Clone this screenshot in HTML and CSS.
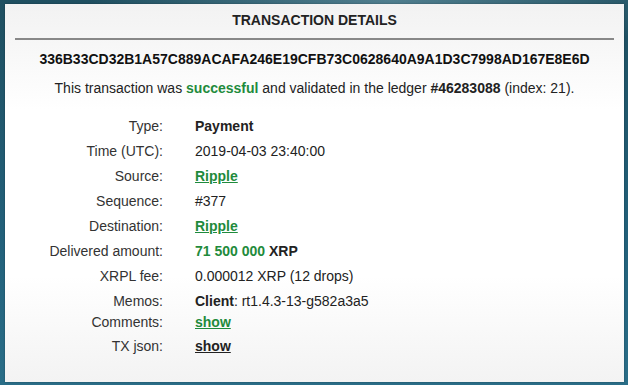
FILE: index.html
```html
<!DOCTYPE html>
<html lang="en">
<head>
    <meta charset="UTF-8">
    <meta name="viewport" content="width=device-width, initial-scale=1.0">
    <title>Transaction Details</title>
    <link rel="stylesheet" href="styles.css">
</head>
<body>
    <div class="card">
        <h1 class="card-title">TRANSACTION DETAILS</h1>
        <div class="tx-hash">336B33CD32B1A57C889ACAFA246E19CFB73C0628640A9A1D3C7998AD167E8E6D</div>
        <p class="tx-status">This transaction was <span class="green">successful</span> and validated in the ledger <b>#46283088</b> (index: 21).</p>

        <!-- Transaction fields -->
        <table class="details">
            <tr>
                <td class="label">Type:</td>
                <td><b>Payment</b></td>
            </tr>
            <tr>
                <td class="label">Time (UTC):</td>
                <td>2019-04-03 23:40:00</td>
            </tr>
            <tr>
                <td class="label">Source:</td>
                <td><a href="#" class="link">Ripple</a></td>
            </tr>
            <tr>
                <td class="label">Sequence:</td>
                <td>#377</td>
            </tr>
            <tr>
                <td class="label">Destination:</td>
                <td><a href="#" class="link">Ripple</a></td>
            </tr>
            <tr>
                <td class="label">Delivered amount:</td>
                <td><b class="green">71 500 000</b> <b>XRP</b></td>
            </tr>
            <tr>
                <td class="label">XRPL fee:</td>
                <td>0.000012 XRP (12 drops)</td>
            </tr>
            <tr class="memo-row">
                <td class="label">Memos:</td>
                <td><b>Client</b>: rt1.4.3-13-g582a3a5</td>
            </tr>
            <tr class="comment-row">
                <td class="label">Comments:</td>
                <td><a href="#" class="link">show</a></td>
            </tr>
            <tr>
                <td class="label">TX json:</td>
                <td><a href="#" class="link dark">show</a></td>
            </tr>
        </table>
    </div>
</body>
</html>
```

FILE: styles.css
```css
html, body {
    height: 100%;
}
body {
    font-family: "Liberation Sans", Arial, sans-serif;
    font-size: 14px;
    color: #222;
    margin: 0;
    padding: 4px 4px 3px 5px;
    box-sizing: border-box;
    background-color: #22576a;
    background-image:
        radial-gradient(ellipse 300px 60px at 62% 0, rgba(120, 165, 180, 0.55), rgba(120, 165, 180, 0) 100%),
        linear-gradient(to bottom, #1f4f60 0%, #22607a 60%, #2a6e88 100%);
}
.card {
    height: 100%;
    background: linear-gradient(to bottom, #f2f2f2 0%, #ffffff 28%, #ffffff 72%, #f3f3f3 100%);
    box-shadow: 0 0 2px rgba(0, 0, 0, 0.3);
}
.card-title {
    margin: 0 10px 0 10px;
    padding: 8px 0 10px;
    font-size: 14px;
    line-height: 16px;
    font-weight: bold;
    text-align: center;
    color: #222;
    border-bottom: 2px solid #888;
}
.tx-hash {
    margin-top: 11px;
    font-weight: bold;
    line-height: 16px;
    text-align: center;
    color: #111;
}
.tx-status {
    margin: 11px 0 0;
    line-height: 20px;
    text-align: center;
}
.green {
    color: #1f8b3c;
    font-weight: bold;
}
.details {
    margin-top: 16px;
    border-collapse: collapse;
}
.details td {
    padding: 2px 0;
    line-height: 21px;
    vertical-align: top;
}
.details .label {
    width: 158px;
    text-align: right;
    padding-right: 32px;
    color: #333;
}
.details .memo-row td {
    padding-bottom: 0;
}
.details .comment-row td {
    padding-top: 1px;
    padding-bottom: 0;
    line-height: 19px;
}
.details .comment-row + tr td {
    padding-top: 4px;
}
.link {
    color: #1f8b3c;
    font-weight: bold;
    text-decoration: underline;
}
.link.dark {
    color: #222;
}
```
